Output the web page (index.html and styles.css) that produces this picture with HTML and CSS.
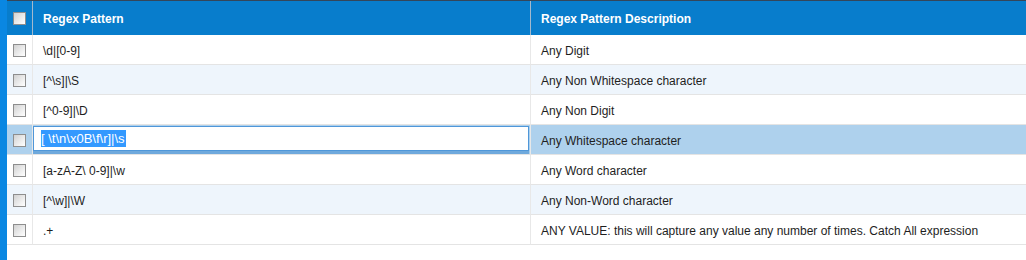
FILE: index.html
```html
<!DOCTYPE html>
<html lang="en">
<head>
    <meta charset="UTF-8">
    <title>Regex Patterns</title>
    <link rel="stylesheet" href="styles.css">
</head>
<body>
    <div class="page">
        <div class="rail"></div>
        <div class="grid">
            <table>
                <colgroup>
                    <col class="col-check">
                    <col class="col-pattern">
                    <col>
                </colgroup>
                <thead>
                    <tr>
                        <th class="check"><span class="box"></span></th>
                        <th>Regex Pattern</th>
                        <th>Regex Pattern Description</th>
                    </tr>
                </thead>
                <tbody>
                    <tr>
                        <td class="check"><span class="box"></span></td>
                        <td>\d|[0-9]</td>
                        <td>Any Digit</td>
                    </tr>
                    <tr class="alt">
                        <td class="check"><span class="box"></span></td>
                        <td>[^\s]|\S</td>
                        <td>Any Non Whitespace character</td>
                    </tr>
                    <tr>
                        <td class="check"><span class="box"></span></td>
                        <td>[^0-9]|\D</td>
                        <td>Any Non Digit</td>
                    </tr>
                    <tr class="selected">
                        <td class="check"><span class="box"></span></td>
                        <td class="editing">
                            <div class="editor"><span class="sel">[ \t\n\x0B\f\r]|\s</span></div>
                        </td>
                        <td>Any Whitespace character</td>
                    </tr>
                    <tr>
                        <td class="check"><span class="box"></span></td>
                        <td>[a-zA-Z\ 0-9]|\w</td>
                        <td>Any Word character</td>
                    </tr>
                    <tr class="alt">
                        <td class="check"><span class="box"></span></td>
                        <td>[^\w]|\W</td>
                        <td>Any Non-Word character</td>
                    </tr>
                    <tr>
                        <td class="check"><span class="box"></span></td>
                        <td>.+</td>
                        <td>ANY VALUE: this will capture any value any number of times. Catch All expression</td>
                    </tr>
                </tbody>
            </table>
        </div>
    </div>
</body>
</html>
```

FILE: styles.css
```css
* {
    box-sizing: border-box;
    margin: 0;
    padding: 0;
}

body {
    font-family: 'Liberation Sans', Arial, sans-serif;
    font-size: 12px;
    color: #1e1e1e;
    background: #fff;
}

.page {
    display: flex;
    height: 260px;
}

.rail {
    width: 7px;
    flex-shrink: 0;
    background: #0a87e2;
}

.grid {
    flex: 1;
    border-top: 1px solid #34465a;
}

table {
    width: 100%;
    border-collapse: separate;
    border-spacing: 0;
    table-layout: fixed;
}

.col-check {
    width: 26px;
}

.col-pattern {
    width: 498px;
}

th {
    height: 34px;
    background: #087dcc;
    color: #fff;
    font-weight: bold;
    text-align: left;
    padding: 1px 10px 0;
    border-right: 1px solid #a3b9cd;
}

th:last-child {
    border-right: none;
}

td {
    height: 30px;
    padding: 2px 10px 0;
    border-bottom: 1px solid #e4e4e4;
    border-right: 1px solid #e8e8e8;
    white-space: nowrap;
}

td:last-child {
    border-right: none;
}

.check {
    padding: 0;
    text-align: center;
}

.box {
    display: inline-block;
    width: 13px;
    height: 13px;
    vertical-align: middle;
    border: 1px solid #8e8e8e;
    background: linear-gradient(135deg, #d2d2d2 0%, #f2f2f2 70%, #fff 100%);
}

tr.alt td {
    background: #eef5fc;
}

tr.selected td {
    background: #aed1ed;
}

td.editing {
    padding: 1px 1px 3px 0;
}

.editor {
    height: 25px;
    background: #fff;
    border: 1px solid #4f97d9;
    box-shadow: 0 3px 0 #6fa9dc;
    padding: 3px 0 0 7px;
    font-size: 13px;
    line-height: 17px;
}

.sel {
    display: inline-block;
    background: #3399ff;
    color: #fff;
    padding: 0 1px 0 0;
}
```
